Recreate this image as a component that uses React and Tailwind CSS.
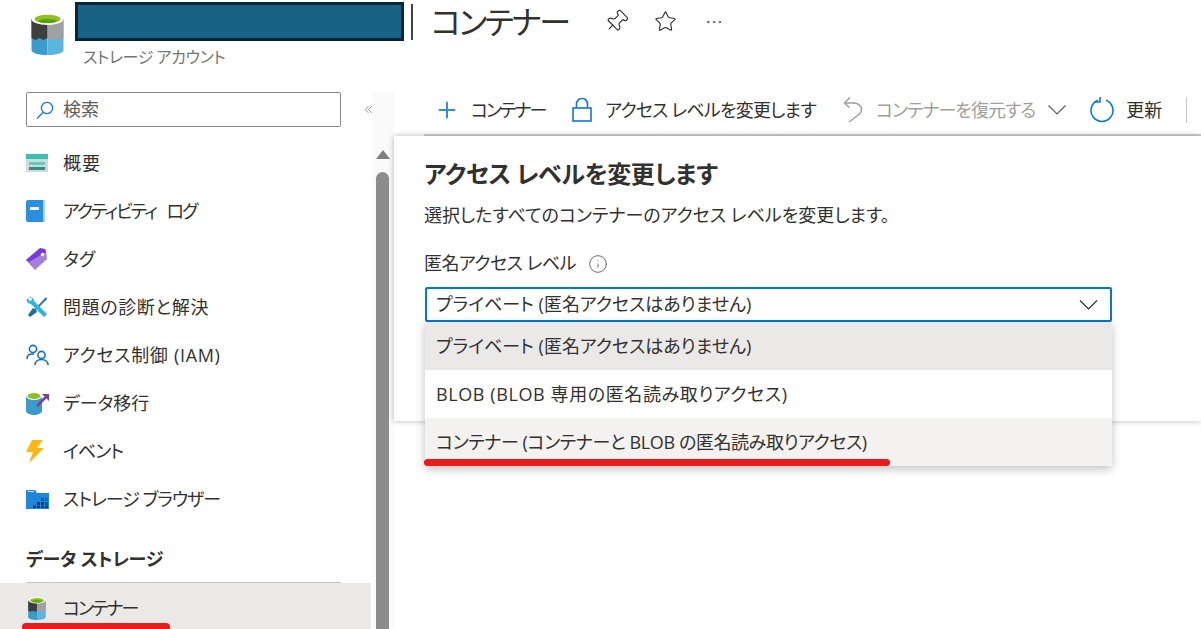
import { Plus, Star, Ellipsis, Pin, Info } from 'lucide-react';

const FONT = "font-['Open_Sans','Noto_Sans_CJK_JP',sans-serif] [font-feature-settings:'palt']";

function Bucket({ className }) {
  return (
    <svg viewBox="0 0 32 42" className={className}>
      <path d="M0 6v31c0 3 7 5 16 5V6z" fill="#3b9ccb" />
      <path d="M32 6v31c0 3-7 5-16 5V6z" fill="#5bb6de" />
      <path d="M0 6h16v19l-4 2-4-2-4 2-4-2z" fill="#3e3e3e" />
      <path d="M16 6h16v19l-4 2-4-2-4 2-4-2z" fill="#a0a1a2" />
      <ellipse cx="16" cy="6" rx="16" ry="6" fill="#fff" />
      <ellipse cx="16" cy="6" rx="13" ry="4.2" fill="#8cc21c" />
      <ellipse cx="16" cy="8" rx="9" ry="2" fill="#5e9e12" />
    </svg>
  );
}

function Chevron({ className }) {
  return (
    <svg viewBox="0 0 18 10" className={className} fill="none" stroke="currentColor" strokeWidth="1.2">
      <path d="M.5.5 9 9 17.5.5" />
    </svg>
  );
}

function OverviewIcon() {
  return (
    <svg viewBox="0 0 22 18" className="w-[22px] h-[18px]">
      <rect width="22" height="18" fill="#d5d8da" rx="1" />
      <rect width="22" height="5" fill="#35c2b0" />
      <rect x="3" y="8" width="16" height="3" fill="#5ccfc0" />
      <rect x="3" y="13" width="16" height="3" fill="#2f8f82" />
    </svg>
  );
}

function BookIcon() {
  return (
    <svg viewBox="0 0 20 22" className="w-[20px] h-[22px]">
      <path d="M1 2a2 2 0 0 1 2-2h16v22H3a2 2 0 0 1-2-2z" fill="#a9cfee" />
      <path d="M0 2a2 2 0 0 1 2-2h15v22H2a2 2 0 0 1-2-2z" fill="#2b8fe0" />
      <rect x="4" y="7" width="9" height="3" fill="#fff" />
    </svg>
  );
}

function TagIcon() {
  return (
    <svg viewBox="0 0 22 22" className="w-[22px] h-[22px]">
      <path d="M0 12 12 2l8 0 1 9L9 22z" fill="#a67fd6" />
      <path d="M0 12 14 0l5 1 1 3L3 14z" fill="#773adc" />
      <circle cx="16.5" cy="6.5" r="1.7" fill="#fff" />
    </svg>
  );
}

function WrenchIcon() {
  return (
    <svg viewBox="0 0 22 22" className="w-[22px] h-[22px]">
      <path d="M20 1 9 13l-2-1-5 7 2 2 7-5-1-2L21 3z" fill="#1b6ea8" />
      <path d="M2 1c3-1 6 1 6 4l13 13-3 3L5 8C2 8 0 5 1 2l3 3 2-1 0-2z" fill="#2fb4dd" />
    </svg>
  );
}

function PeopleIcon() {
  return (
    <svg viewBox="0 0 23 22" className="w-[23px] h-[22px]" fill="none" stroke="#0f6fd8" strokeWidth="1.6">
      <circle cx="7" cy="5" r="3.6" />
      <path d="M1 15c0-3 2-5 5-5h2" />
      <circle cx="15.5" cy="11" r="3.6" />
      <path d="M9 21c0-3 2.5-5.5 6.5-5.5S22 18 22 21" />
    </svg>
  );
}

function MigrateIcon() {
  return (
    <svg viewBox="0 0 24 24" className="w-[24px] h-[24px]">
      <path d="M0 5v15c0 2 4 4 8 4s8-2 8-4V5z" fill="#3b9ccb" />
      <ellipse cx="8" cy="5" rx="8" ry="4" fill="#fff" />
      <ellipse cx="8" cy="5" rx="6.5" ry="3" fill="#8cc21c" />
      <path d="M11 15 20 6" stroke="#7a3f9d" strokeWidth="2.5" />
      <path d="M16 3h7v7z" fill="#7a3f9d" />
    </svg>
  );
}

function BoltIcon() {
  return (
    <svg viewBox="0 0 18 23" className="w-[18px] h-[23px]">
      <path d="M6 0h11l-6 8h7L3 23l4-11H0z" fill="#fcb714" />
    </svg>
  );
}

function ExplorerIcon() {
  return (
    <svg viewBox="0 0 23 19" className="w-[23px] h-[19px]">
      <path d="M0 1a1 1 0 0 1 1-1h8l2 3h12v16H0z" fill="#1f86dc" />
      <rect x="2" y="1" width="6" height="1" fill="#cfe6f8" />
      <rect x="15" y="8" width="3" height="3" fill="#0e5a9e" />
      <rect x="19" y="8" width="3" height="3" fill="#0e5a9e" opacity=".6" />
      <rect x="11" y="12" width="3" height="3" fill="#0b3f73" />
      <rect x="15" y="12" width="3" height="3" fill="#0b3f73" />
      <rect x="19" y="12" width="3" height="3" fill="#0e5a9e" />
      <rect x="7" y="15.5" width="3" height="2.5" fill="#0b3f73" />
      <rect x="11" y="15.5" width="3" height="2.5" fill="#0b3f73" />
      <rect x="15" y="15.5" width="3" height="2.5" fill="#0b3f73" />
      <rect x="19" y="15.5" width="3" height="2.5" fill="#0b3f73" />
    </svg>
  );
}

const menuItems = [
  { label: '概要', icon: <OverviewIcon />, track: 'tracking-[1px]' },
  { label: 'アクティビティ ログ', icon: <BookIcon />, track: 'tracking-[-2px] [word-spacing:8px]' },
  { label: 'タグ', icon: <TagIcon />, track: '' },
  { label: '問題の診断と解決', icon: <WrenchIcon />, track: 'tracking-[0.6px]' },
  { label: 'アクセス制御 (IAM)', icon: <PeopleIcon />, track: 'tracking-[0.7px]' },
  { label: 'データ移行', icon: <MigrateIcon />, track: '' },
  { label: 'イベント', icon: <BoltIcon />, track: 'tracking-[-1px]' },
  { label: 'ストレージ ブラウザー', icon: <ExplorerIcon />, track: 'tracking-[-1px]' },
];

function Sidebar() {
  return (
    <aside className="w-[372px] shrink-0 flex flex-col text-[18px] text-[#323130]">
      <div className="flex items-center h-[35px]">
        <div className="ml-[26px] w-[315px] shrink-0 h-[35px] border border-[#8a8886] rounded-[2px] flex items-center pl-[9px] gap-[9px] text-[#605e5c]">
          <svg viewBox="0 0 18 18" className="w-[18px] h-[18px]" fill="none" stroke="#0f78d4" strokeWidth="1.3">
            <circle cx="11" cy="7" r="5.6" />
            <path d="M7 11.5 1 17.5" />
          </svg>
          <span>検索</span>
        </div>
        <svg viewBox="0 0 11 12" className="ml-[24px] w-[12px] h-[13px] text-[#605e5c]" fill="none" stroke="currentColor" strokeWidth="1">
          <path d="M5.5.5 .7 6l4.8 5.5M10.5.5 5.7 6l4.8 5.5" />
        </svg>
      </div>
      <nav className="mt-[12px] flex flex-col">
        {menuItems.map((item) => (
          <div key={item.label} className="h-[48px] flex items-center pl-[26px]">
            <span className="w-[37px] flex justify-start">{item.icon}</span>
            <span className={item.track}>{item.label}</span>
          </div>
        ))}
      </nav>
      <div className="mt-[20px] ml-[26px] h-[32px] flex items-center font-bold tracking-[-0.2px]">データ ストレージ</div>
      <div className="mt-[7px] ml-[26px] w-[315px] border-t border-[#c8c6c4]" />
      <div className="h-[46px] mr-[1px] bg-[#ebe9e7] flex items-center pl-[28px] pt-[4px]">
        <span className="w-[35px]"><Bucket className="w-[18px] h-[23px]" /></span>
        <span className="tracking-[-2px]">コンテナー</span>
      </div>
    </aside>
  );
}

function Toolbar() {
  return (
    <div className="h-[44px] pb-[6px] ml-[30px] flex items-center border-b-2 border-[#d2d0ce] text-[18px] text-[#323130] whitespace-nowrap">
      <Plus className="ml-[10px] w-[26px] h-[26px] text-[#2f8fe0] shrink-0" strokeWidth={1.8} />
      <span className="ml-[11px] tracking-[-2px]">コンテナー</span>
      <svg viewBox="0 0 20 24" className="ml-[27px] w-[20px] h-[24px] shrink-0" fill="none" stroke="#0f78d4" strokeWidth="1.6">
        <rect x="1" y="10" width="18" height="13" />
        <path d="M4.5 10V6a5.5 5.5 0 0 1 11 0v4" />
      </svg>
      <span className="ml-[13px] tracking-[-0.8px]">アクセス レベルを変更します</span>
      <svg viewBox="0 0 20 26" className="ml-[27px] w-[20px] h-[26px] shrink-0" fill="none" stroke="#a19f9d" strokeWidth="1.5">
        <path d="M7 .5 1.5 6l5 4.5" />
        <path d="M2 6h9c4 0 7.5 3 7.5 6.5 0 2-1 3.5-2 4.5L6 25" />
      </svg>
      <span className="ml-[13px] text-[#a19f9d] tracking-[-1px]">コンテナーを復元する</span>
      <Chevron className="ml-[13px] w-[18px] h-[10px] text-[#605e5c] shrink-0" />
      <svg viewBox="0 0 24 26" className="ml-[24px] w-[24px] h-[26px] shrink-0" fill="none" stroke="#0f78d4" strokeWidth="1.6">
        <path d="M8 3.2a11 11 0 1 0 8 0" />
        <path d="M10 0v5H4.5" />
      </svg>
      <span className="ml-[12px]">更新</span>
      <span className="ml-[24px] h-[26px] border-l border-[#c8c6c4]" />
    </div>
  );
}

function AccessPanel() {
  const options = [
    { label: 'プライベート (匿名アクセスはありません)', bg: 'bg-[#ebe9e7]', track: '' },
    { label: 'BLOB (BLOB 専用の匿名読み取りアクセス)', bg: 'bg-white', track: 'tracking-[0.6px]' },
    { label: 'コンテナー (コンテナーと BLOB の匿名読み取りアクセス)', bg: 'bg-[#f3f2f1]', track: 'tracking-[-0.4px]' },
  ];
  return (
    <div className="absolute left-0 top-[44px] w-[807px] h-[285px] bg-white shadow-[0_0_6px_rgba(0,0,0,0.28)] pl-[30px] text-[#323130]">
      <h2 className="mt-[22px] h-[32px] leading-[32px] text-[24px] font-bold tracking-[-0.4px]">アクセス レベルを変更します</h2>
      <p className="mt-[12px] h-[27px] leading-[27px] text-[18px]">選択したすべてのコンテナーのアクセス レベルを変更します。</p>
      <div className="mt-[21px] h-[27px] flex items-center text-[18px]">
        <span className="tracking-[-0.5px]">匿名アクセス レベル</span>
        <Info className="ml-[12px] w-[20px] h-[20px] text-[#605e5c]" strokeWidth={1.1} />
      </div>
      <div className="relative mt-[10px] ml-[1px] w-[687px] text-[18px]">
        <div className="h-[35px] border-2 border-[#0078d4] rounded-[2px] flex items-center justify-between pl-[9px] pr-[12px]">
          <span>プライベート (匿名アクセスはありません)</span>
          <Chevron className="w-[19px] h-[10px] text-[#323130]" />
        </div>
        <ul className="absolute left-0 top-[35px] w-full rounded-b-[2px] shadow-[0_3px_10px_rgba(0,0,0,0.25)]">
          {options.map((o) => (
            <li key={o.label} className={`h-[48px] flex items-center pl-[11px] ${o.bg} ${o.track}`}>{o.label}</li>
          ))}
        </ul>
        <div className="absolute left-[-1px] top-[172px] w-[466px] h-[7px] rounded-full bg-[#e81c1c]" />
      </div>
    </div>
  );
}

export default function App() {
  return (
    <div className={`relative w-[1201px] h-[629px] overflow-hidden bg-white ${FONT}`}>
      <header className="h-[92px] relative flex items-start">
        <Bucket className="ml-[31px] mt-[13px] w-[33px] h-[42px] shrink-0" />
        <div className="ml-[11px] mt-[2px]">
          <div className="flex items-center h-[39px]">
            <div className="w-[329px] h-[39px] bg-[#186285] border-[3px] border-[#04263a]" />
            <span className="ml-[7px] h-[36px] border-l-[2px] border-[#444444]" />
            <h1 className="ml-[18px] pr-[4px] text-[32px] leading-[39px] tracking-[-2.5px] text-[#323130] whitespace-nowrap">コンテナー</h1>
            <Pin className="ml-[32px] w-[25px] h-[25px] rotate-45 text-[#323130]" strokeWidth={1.1} />
            <Star className="ml-[25px] w-[23px] h-[23px] text-[#323130]" strokeWidth={1.2} />
            <Ellipsis className="ml-[27px] w-[20px] h-[20px] text-[#605e5c]" strokeWidth={1.2} />
          </div>
          <div className="ml-[8px] mt-[4px] text-[16px] leading-[24px] tracking-[-0.4px] text-[#757575]">ストレージ アカウント</div>
        </div>
      </header>
      <div className="flex h-[537px]">
        <Sidebar />
        <div className="w-[22px] shrink-0 bg-[#fafafa] flex flex-col pl-[4px] pt-[58px]">
          <div className="w-0 h-0 border-x-[7px] border-x-transparent border-b-[9px] border-b-[#7f7f7f]" />
          <div className="mt-[13px] w-[13px] flex-1 rounded-t-[7px] bg-[#8c8c8c]" />
        </div>
        <main className="relative flex-1">
          <Toolbar />
          <AccessPanel />
        </main>
      </div>
      <div className="absolute left-[22px] top-[623px] w-[148px] h-[8px] rounded-full bg-[#e81c1c]" />
    </div>
  );
}
